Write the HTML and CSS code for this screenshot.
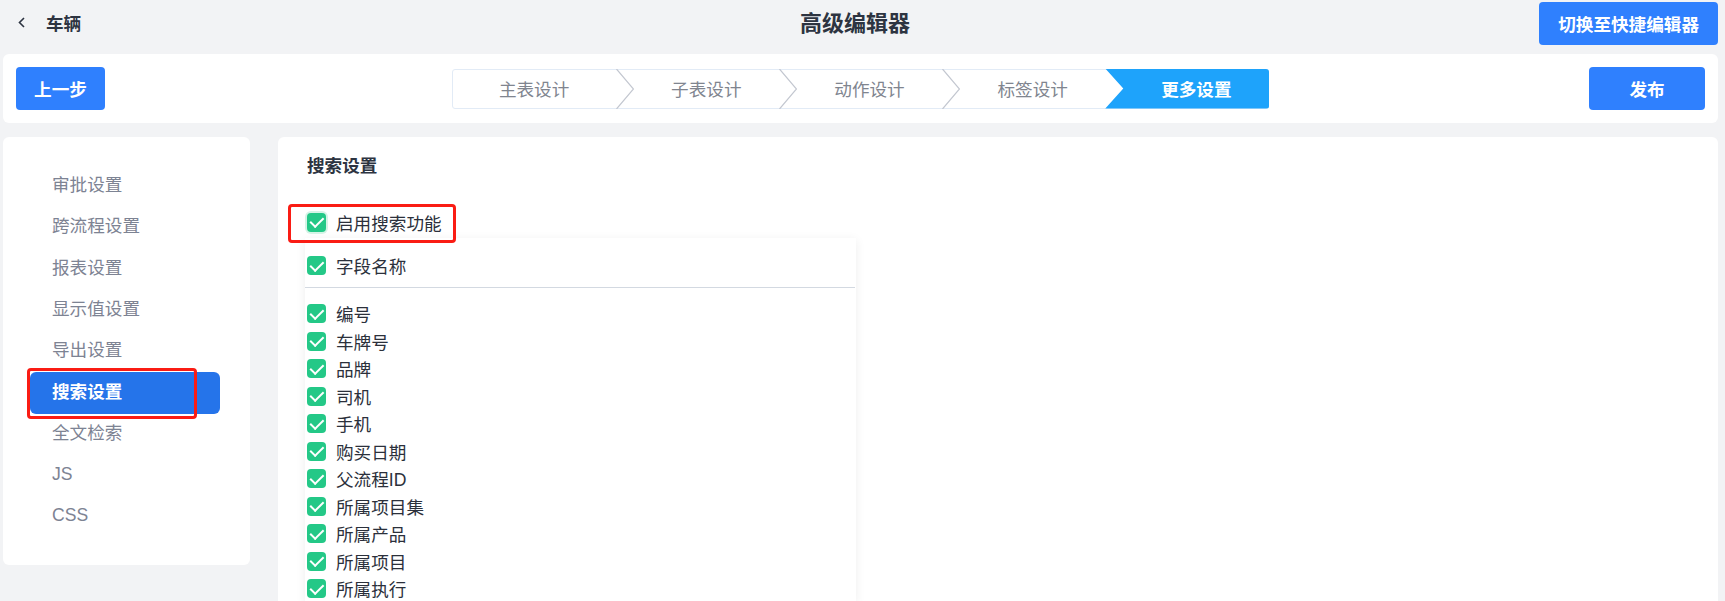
FILE: index.html
```html
<!DOCTYPE html>
<html lang="zh-CN">
<head>
    <meta charset="UTF-8">
    <meta name="viewport" content="width=device-width, initial-scale=1.0">
    <title>高级编辑器</title>
    <link rel="stylesheet" href="styles.css">
</head>
<body>
    <header class="topbar">
        <a class="back">
            <svg width="7" height="11" viewBox="0 0 7 11"><path d="M6 1L1.5 5.5 6 10" fill="none" stroke="#2d3441" stroke-width="1.6"/></svg>
            <span>车辆</span>
        </a>
        <h1 class="page-title">高级编辑器</h1>
        <button class="btn btn-switch">切换至快捷编辑器</button>
    </header>

    <div class="toolbar">
        <button class="btn btn-prev">上一步</button>
        <div class="steps">
            <div class="step">主表设计<svg class="step-arrow" viewBox="0 0 18 40"><path d="M0.5 0L17.5 20 0.5 40" fill="none" stroke="#c3c7d0" stroke-width="1.2"/></svg></div>
            <div class="step">子表设计<svg class="step-arrow" viewBox="0 0 18 40"><path d="M0.5 0L17.5 20 0.5 40" fill="none" stroke="#c3c7d0" stroke-width="1.2"/></svg></div>
            <div class="step">动作设计<svg class="step-arrow" viewBox="0 0 18 40"><path d="M0.5 0L17.5 20 0.5 40" fill="none" stroke="#c3c7d0" stroke-width="1.2"/></svg></div>
            <div class="step">标签设计</div>
            <div class="step step-active">更多设置</div>
        </div>
        <button class="btn btn-publish">发布</button>
    </div>

    <div class="layout">
        <aside class="side-menu">
            <ul>
                <li>审批设置</li>
                <li>跨流程设置</li>
                <li>报表设置</li>
                <li>显示值设置</li>
                <li>导出设置</li>
                <li class="active">搜索设置<span class="mark-box mark-menu"></span></li>
                <li>全文检索</li>
                <li>JS</li>
                <li>CSS</li>
            </ul>
        </aside>

        <main class="panel">
            <h2>搜索设置</h2>
            <label class="check-row enable-row">
                <span class="checkbox focused"></span>启用搜索功能
                <span class="mark-box mark-enable"></span>
            </label>

            <div class="field-dropdown">
                <label class="check-row"><span class="checkbox"></span>字段名称</label>
                <div class="divider"></div>
                <label class="check-row"><span class="checkbox"></span>编号</label>
                <label class="check-row"><span class="checkbox"></span>车牌号</label>
                <label class="check-row"><span class="checkbox"></span>品牌</label>
                <label class="check-row"><span class="checkbox"></span>司机</label>
                <label class="check-row"><span class="checkbox"></span>手机</label>
                <label class="check-row"><span class="checkbox"></span>购买日期</label>
                <label class="check-row"><span class="checkbox"></span>父流程ID</label>
                <label class="check-row"><span class="checkbox"></span>所属项目集</label>
                <label class="check-row"><span class="checkbox"></span>所属产品</label>
                <label class="check-row"><span class="checkbox"></span>所属项目</label>
                <label class="check-row"><span class="checkbox"></span>所属执行</label>
            </div>
        </main>
    </div>
</body>
</html>
```

FILE: styles.css
```css
body {
    margin: 0;
    background: #f2f3f5;
    font-family: "Liberation Sans", "Noto Sans CJK SC", sans-serif;
    color: #2b303b;
    overflow: hidden;
}

/* top header */
.topbar {
    display: grid;
    grid-template-columns: 1fr auto 1fr;
    align-items: center;
    height: 47px;
    padding: 0 7px 0 18px;
}

.back {
    display: flex;
    align-items: center;
    gap: 21px;
    font-size: 17.6px;
    font-weight: bold;
    color: #2d3441;
    margin-bottom: 3px;
}

.back svg {
    display: block;
}

.page-title {
    margin: 0 26px 6px 0;
    font-size: 22px;
    font-weight: bold;
    color: #2d3441;
}

.btn {
    border: none;
    border-radius: 4px;
    background: #2f80fe;
    color: #fff;
    font-family: inherit;
    font-size: 17.6px;
    font-weight: bold;
    height: 43px;
    cursor: pointer;
}

.btn-switch {
    justify-self: end;
    padding: 0 19px;
}

/* steps toolbar */
.toolbar {
    display: grid;
    grid-template-columns: 1fr auto 1fr;
    align-items: center;
    height: 69px;
    margin: 7px 7px 0 3px;
    padding: 0 13px;
    background: #fff;
    border-radius: 6px;
}

.btn-prev {
    width: 89px;
    justify-self: start;
}

.btn-publish {
    width: 116px;
    justify-self: end;
}

.steps {
    display: flex;
    height: 38px;
    border: 1px solid #e2ebf6;
    border-radius: 3px;
}

.step {
    position: relative;
    width: 163.2px;
    box-sizing: border-box;
    display: flex;
    align-items: center;
    justify-content: center;
    font-size: 17.6px;
    color: #80858f;
}

.step + .step {
    padding-left: 18px;
}

.step-arrow {
    position: absolute;
    left: 100%;
    top: -1px;
    width: 18px;
    height: 40px;
    z-index: 1;
}

.step-active {
    width: 164.2px;
    height: 40px;
    margin: -1px -1px -1px 0;
    background: #1ea3fb;
    color: #fff;
    font-weight: bold;
    border-radius: 0 3px 3px 0;
    clip-path: polygon(0 0, 100% 0, 100% 100%, 0 100%, 18px 50%);
}

/* body layout */
.layout {
    display: flex;
    gap: 28px;
    margin: 14px 7px 0 3px;
    min-height: calc(100vh - 137px);
}

.side-menu {
    width: 247px;
    flex: none;
    align-self: flex-start;
    box-sizing: border-box;
    padding: 28px 30px 29px 27px;
    background: #fff;
    border-radius: 6px;
}

.side-menu ul {
    list-style: none;
    margin: 0;
    padding: 0;
}

.side-menu li {
    position: relative;
    height: 41.25px;
    line-height: 41.25px;
    padding-left: 22px;
    font-size: 17.6px;
    color: #7d8393;
    border-radius: 6px;
}

.side-menu li.active {
    background: #2574ea;
    color: #fff;
    font-weight: bold;
    margin-top: 1px;
    margin-bottom: -1px;
}

/* red outline marks */
.mark-box {
    position: absolute;
    box-sizing: border-box;
    border: 3.5px solid #fa1c14;
    border-radius: 4px;
    pointer-events: none;
}

.mark-menu {
    left: -3px;
    top: -4px;
    width: 170px;
    height: 51px;
}

.mark-enable {
    left: -19px;
    top: -4px;
    width: 168px;
    height: 39px;
}

.panel {
    flex: 1;
    box-sizing: border-box;
    padding: 16.5px 29px 0;
    background: #fff;
    border-radius: 6px 6px 0 0;
}

.panel h2 {
    margin: 0;
    font-size: 17.6px;
    line-height: 25px;
    font-weight: bold;
    color: #2d3441;
}

.check-row {
    display: flex;
    align-items: center;
    gap: 10px;
    height: 27.5px;
    font-size: 17.6px;
    color: #2b303b;
}

.enable-row {
    position: relative;
    width: max-content;
    margin: 29.75px 0 2px;
}

.checkbox {
    position: relative;
    width: 19px;
    height: 19px;
    flex: none;
    background: #24c887;
    border-radius: 4px;
}

.checkbox::after {
    content: '';
    position: absolute;
    left: 6px;
    top: 1.5px;
    width: 5.5px;
    height: 11px;
    border: solid #fff;
    border-width: 0 2.8px 2.8px 0;
    transform: rotate(45deg);
}

.checkbox.focused {
    box-shadow: 0 0 0 2px #d5f3e6;
}

.field-dropdown {
    width: 551px;
    box-sizing: border-box;
    margin-left: -2px;
    padding: 14px 0 0 2px;
    background: #fff;
    box-shadow: 0 2px 10px rgba(0, 0, 0, 0.07);
}

.divider {
    height: 1px;
    margin: 7.5px 1px 12px -2px;
    background: #d3d9e1;
}
```
